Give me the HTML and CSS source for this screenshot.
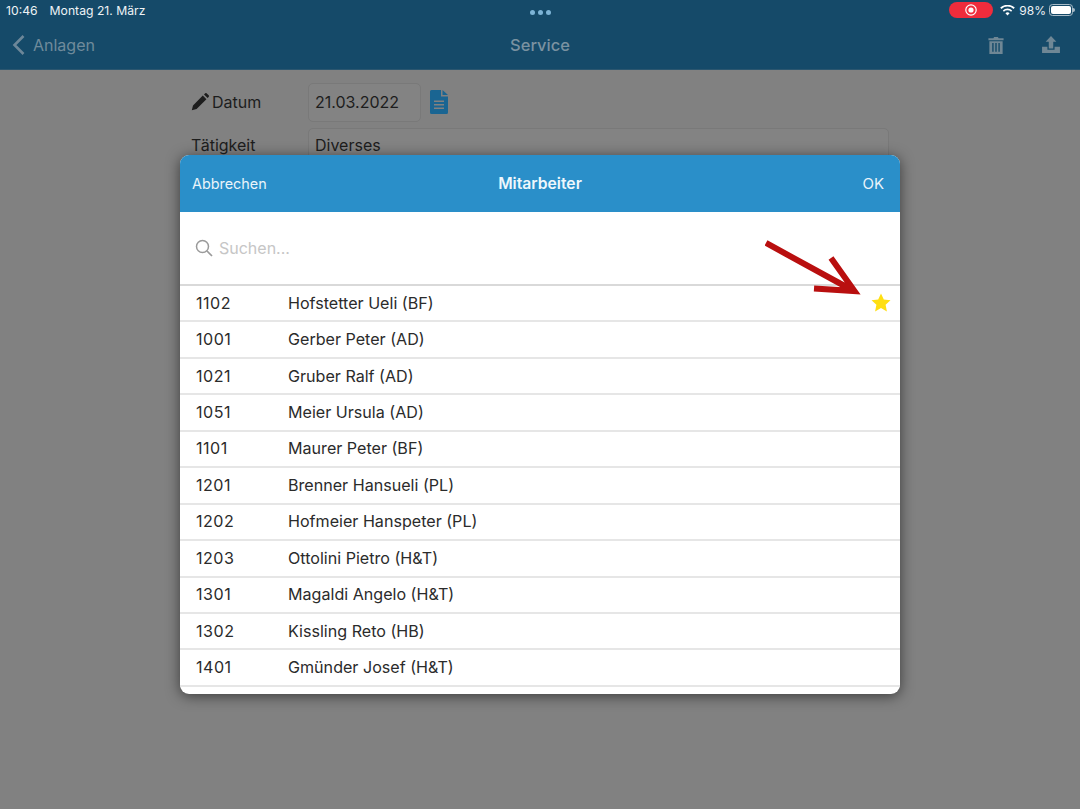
FILE: index.html
```html
<!DOCTYPE html>
<html lang="de">
<head>
<meta charset="utf-8">
<title>Service</title>
<link rel="stylesheet" href="styles.css">
</head>
<body>
<div class="app">
  <header class="top">
    <div class="status">
      <div class="status-left"><span>10:46</span><span>Montag 21. März</span></div>
      <div class="dots"><i></i><i></i><i></i></div>
      <div class="status-right">
        <span class="rec"><svg width="14" height="14" viewBox="0 0 14 14"><circle cx="7" cy="7" r="5.2" fill="none" stroke="#fff" stroke-width="1.2"/><circle cx="7" cy="7" r="2.6" fill="#fff"/></svg></span>
        <svg class="wifi" width="15" height="11" viewBox="0 0 15 11"><path d="M7.5 10.6 5.4 8.2a3 3 0 0 1 4.2 0zM3.9 6.7 2.8 5.4a7 7 0 0 1 9.4 0l-1.1 1.3a5.2 5.2 0 0 0-7.2 0zM1.4 3.9.2 2.6a10.8 10.8 0 0 1 14.6 0l-1.2 1.3a9 9 0 0 0-12.2 0z" fill="#fff"/></svg>
        <span class="pct">98%</span>
        <span class="battery"><span class="battery-fill"></span></span>
        <span class="battery-nub"></span>
      </div>
    </div>
    <nav class="nav">
      <div class="nav-left">
        <svg width="14" height="22" viewBox="0 0 14 22"><path d="M11.5 2 2.5 11l9 9" fill="none" stroke="#6d8799" stroke-width="2.6"/></svg>
        <span>Anlagen</span>
      </div>
      <div class="nav-title">Service</div>
      <div class="nav-right">
        <svg width="16" height="18" viewBox="0 0 16 19"><path d="M0 2.500h5.200L6 1h4l.8 1.500H16V4.500H0zM1 5.500h14V19H1zM4 7.500v9h1.500v-9zM7.250 7.500v9h1.500v-9zM10.500 7.500v9H12v-9z" fill="#6f8795" fill-rule="evenodd"/></svg>
        <svg width="18" height="17" viewBox="0 0 20 19"><path d="M10 0l6 6.500h-3.500V14h-5V6.500H4zM0 12h6v3.500h8V12h6v7H0z" fill="#6f8795"/></svg>
      </div>
    </nav>
  </header>

  <main class="form">
    <div class="form-row date-row">
      <label class="form-label"><svg width="18" height="18" viewBox="0 0 18 18"><path d="M11.800 2.600l3.600 3.600L5.600 16 .8 17.200 2 12.400zM13 1.400l1-1a1.300 1.300 0 0 1 1.800 0l1.800 1.800a1.300 1.300 0 0 1 0 1.800l-1 1z" fill="#1d1d1d"/></svg>Datum</label>
      <div class="field date-field">21.03.2022</div>
      <svg class="doc" width="18" height="24" viewBox="0 0 18 24"><path d="M0 1.500A1.500 1.500 0 0 1 1.500 0H11v6.500h7V22.500a1.500 1.500 0 0 1-1.500 1.500h-15A1.500 1.500 0 0 1 0 22.500zM12.500 0 18 5h-5.500zM4 10.500v1.500h10v-1.500zM4 14v1.500h10V14zM4 17.500V19h10v-1.500z" fill="#1a6592" fill-rule="evenodd"/></svg>
    </div>
    <div class="form-row">
      <label class="form-label">Tätigkeit</label>
      <div class="field wide-field">Diverses</div>
    </div>
  </main>

  <div class="overlay">
    <section class="modal">
      <div class="modal-head">
        <span class="head-cancel">Abbrechen</span>
        <strong>Mitarbeiter</strong>
        <span class="head-ok">OK</span>
      </div>
      <div class="search">
        <svg width="18" height="18" viewBox="0 0 18 18"><circle cx="7.500" cy="7.500" r="6" fill="none" stroke="#9a9a9a" stroke-width="1.500"/><path d="M12 12l5 5" stroke="#9a9a9a" stroke-width="1.700"/></svg>
        <span>Suchen...</span>
      </div>
      <ul class="list">
        <li class="row"><span class="no">1102</span><span>Hofstetter Ueli (BF)</span><svg class="star" width="20" height="19" viewBox="0 0 20 19"><path d="M10 .5l2.800 6 6.700.8-4.900 4.500 1.300 6.600L10 15.100l-5.900 3.300 1.300-6.600L.5 7.300l6.700-.8z" fill="#ffdf12"/></svg></li>
        <li class="row"><span class="no">1001</span><span>Gerber Peter (AD)</span></li>
        <li class="row"><span class="no">1021</span><span>Gruber Ralf (AD)</span></li>
        <li class="row"><span class="no">1051</span><span>Meier Ursula (AD)</span></li>
        <li class="row"><span class="no">1101</span><span>Maurer Peter (BF)</span></li>
        <li class="row"><span class="no">1201</span><span>Brenner Hansueli (PL)</span></li>
        <li class="row"><span class="no">1202</span><span>Hofmeier Hanspeter (PL)</span></li>
        <li class="row"><span class="no">1203</span><span>Ottolini Pietro (H&amp;T)</span></li>
        <li class="row"><span class="no">1301</span><span>Magaldi Angelo (H&amp;T)</span></li>
        <li class="row"><span class="no">1302</span><span>Kissling Reto (HB)</span></li>
        <li class="row"><span class="no">1401</span><span>Gmünder Josef (H&amp;T)</span></li>
      </ul>
    </section>
  </div>

  <svg class="arrow" width="100" height="60" viewBox="0 0 100 60"><path d="M1 3 87 50M66 18 89.500 51 49 48.500" fill="none" stroke="#b90f0f" stroke-width="6"/></svg>
</div>
</body>
</html>
```
FILE: styles.css
```css
* { box-sizing: border-box; }
html, body { margin: 0; padding: 0; }
body { font-family: Inter, "Liberation Sans", sans-serif; color: #1f1f1f; background: #818181; }
.app { position: relative; width: 1080px; height: 809px; overflow: hidden; background: #818181; }

.top { height: 70px; background: #154a69; border-bottom: 1px solid #2b566f; }
.status { height: 20px; display: grid; grid-template-columns: 1fr auto 1fr; align-items: center; padding: 0 5px; color: #eef3f6; font-size: 12.200px; }
.status-left { display: flex; gap: 12px; margin-left: 1px; }
.dots { display: flex; gap: 3px; margin-top: 5px; }
.dots i { width: 5px; height: 5px; border-radius: 50%; background: #7db4d6; }
.status-right { display: flex; align-items: center; justify-content: flex-end; }
.rec { width: 44px; height: 16px; border-radius: 8px; background: #ef2c3c; display: flex; align-items: center; justify-content: center; margin-right: 7px; }
.wifi { margin-right: 4px; }
.pct { font-size: 12px; margin-right: 3px; }
.battery { width: 24px; height: 12px; border: 1px solid #a9bcc8; border-radius: 3.500px; padding: 1px; }
.battery-fill { display: block; height: 100%; background: #fff; border-radius: 2px; }
.battery-nub { width: 2px; height: 4px; background: #a9bcc8; border-radius: 0 2px 2px 0; }

.nav { height: 49px; display: grid; grid-template-columns: 1fr auto 1fr; align-items: center; padding: 0 20px; color: #6f8a9b; font-size: 16px; }
.nav-left { display: flex; align-items: center; gap: 7px; margin-left: -8px; }
.nav-title { font-weight: 500; font-size: 16.500px; color: #7a92a1; }
.nav-right { display: flex; justify-content: flex-end; align-items: center; gap: 38px; }

.form { width: 700px; margin: 0 auto; padding-top: 11px; font-size: 16px; }
.form-row { display: flex; align-items: center; }
.date-row { height: 42px; margin-bottom: 5px; }
.form-label { width: 118px; padding-left: 1px; display: flex; align-items: center; gap: 3px; color: #1d1d1d; }
.field { border: 1px solid #797979; border-radius: 5px; padding: 0 6px; display: flex; align-items: center; background: #838383; color: #1d1d1d; }
.date-field { width: 113px; height: 39px; }
.doc { margin-left: 9px; }
.wide-field { width: 581px; height: 34px; }

.overlay { position: absolute; inset: 0; padding: 155px 180px 0; }
.modal { width: 720px; height: 539px; border-radius: 9px; overflow: hidden; background: #fff; box-shadow: 0 2px 14px rgba(0,0,0,.55); display: flex; flex-direction: column; }
.modal-head { height: 57px; background: #2a8fc9; color: #e9f4fa; display: grid; grid-template-columns: 1fr auto 1fr; align-items: center; padding: 0 16px; font-size: 14.400px; flex: none; }
.head-cancel { margin-left: -4px; }
.modal-head strong { font-weight: 600; font-size: 15.700px; color: #eef7fc; }
.head-ok { text-align: right; font-size: 15px; }
.search { height: 74px; flex: none; display: flex; align-items: center; gap: 6px; padding: 0 0 1px 15px; color: #c6c6c6; font-size: 16px; border-bottom: 2px solid #d9d9d9; }
.list { list-style: none; margin: 0; padding: 0; }
.row { height: 36.450px; display: grid; grid-template-columns: 92px 1fr auto; align-items: center; padding: 0 9px 1px 16px; font-size: 16.100px; color: #2b2b2b; border-bottom: 2px solid #e6e6e6; }
.no { letter-spacing: .5px; }
.star { display: block; }

.arrow { position: absolute; left: 765px; top: 240px; }
```
